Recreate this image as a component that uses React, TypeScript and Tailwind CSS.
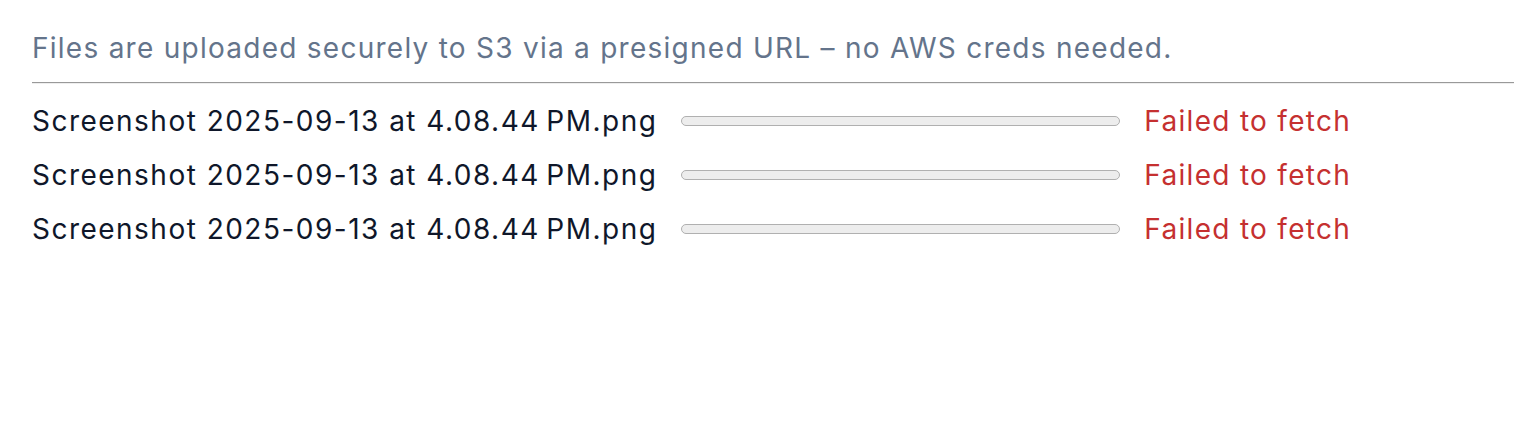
import React from 'react';

const uploads = [
  { name: 'Screenshot 2025-09-13 at 4.08.44\u202FPM.png', error: 'Failed to fetch' },
  { name: 'Screenshot 2025-09-13 at 4.08.44\u202FPM.png', error: 'Failed to fetch' },
  { name: 'Screenshot 2025-09-13 at 4.08.44\u202FPM.png', error: 'Failed to fetch' },
];

export default function App() {
  return (
    <div className="min-h-[446px] bg-white pl-8 pt-[27px] font-['Inter',sans-serif] text-[28px] leading-[42px]">
      <p className="tracking-[1.26px] text-[#64748b]">
        Files are uploaded securely to S3 via a presigned URL – no AWS creds needed.
      </p>
      <hr className="mt-[13px] border-t border-b border-t-[#999999] border-b-[#eeeeee]" />

      <ul className="mt-[16px] flex flex-col gap-3">
        {uploads.map((u, idx) => (
          <li key={idx} className="flex items-center gap-6">
            <span className="tracking-[1.48px] text-[#0f172a]">{u.name}</span>
            {/* progress stays empty when the request fails */}
            <div className="h-[10px] w-[439px] rounded-full border-[1.5px] border-[#b0b0b0] bg-[#ededed]" />
            <span className="tracking-[1.3px] text-[#c53030]">{u.error}</span>
          </li>
        ))}
      </ul>
    </div>
  );
}
